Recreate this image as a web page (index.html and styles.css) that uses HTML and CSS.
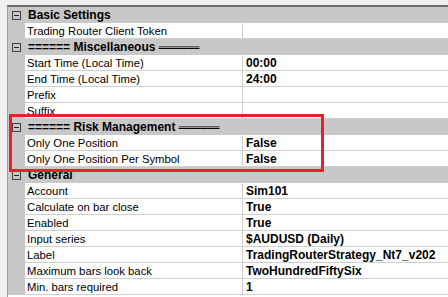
FILE: index.html
```html
<!DOCTYPE html>
<html>
<head>
<meta charset="utf-8">
<link rel="stylesheet" href="styles.css">
</head>
<body>
<div class="frame">
  <div class="grid">
    <div class="cat"><span class="gut"><span class="toggle"></span></span><span class="cat-name">Basic Settings</span></div>
    <div class="prop"><span class="gut"></span><span class="name">Trading Router Client Token</span><span class="value"></span></div>

    <div class="cat"><span class="gut"><span class="toggle"></span></span><span class="cat-name">====== Miscellaneous <span class="dbl">═══════</span></span></div>
    <div class="prop"><span class="gut"></span><span class="name">Start Time (Local Time)</span><span class="value">00:00</span></div>
    <div class="prop"><span class="gut"></span><span class="name">End Time (Local Time)</span><span class="value">24:00</span></div>
    <div class="prop"><span class="gut"></span><span class="name">Prefix</span><span class="value"></span></div>
    <div class="prop"><span class="gut"></span><span class="name">Suffix</span><span class="value"></span></div>

    <div class="cat"><span class="gut"><span class="toggle"></span></span><span class="cat-name">====== Risk Management <span class="dbl">═══════</span></span></div>
    <div class="prop"><span class="gut"></span><span class="name">Only One Position</span><span class="value">False</span></div>
    <div class="prop"><span class="gut"></span><span class="name">Only One Position Per Symbol</span><span class="value">False</span></div>

    <div class="cat"><span class="gut"><span class="toggle"></span></span><span class="cat-name">General</span></div>
    <div class="prop"><span class="gut"></span><span class="name">Account</span><span class="value">Sim101</span></div>
    <div class="prop"><span class="gut"></span><span class="name">Calculate on bar close</span><span class="value">True</span></div>
    <div class="prop"><span class="gut"></span><span class="name">Enabled</span><span class="value">True</span></div>
    <div class="prop"><span class="gut"></span><span class="name">Input series</span><span class="value">$AUDUSD (Daily)</span></div>
    <div class="prop"><span class="gut"></span><span class="name">Label</span><span class="value">TradingRouterStrategy_Nt7_v202</span></div>
    <div class="prop"><span class="gut"></span><span class="name">Maximum bars look back</span><span class="value">TwoHundredFiftySix</span></div>
    <div class="prop"><span class="gut"></span><span class="name">Min. bars required</span><span class="value">1</span></div>
  </div>
  <div class="highlight"></div>
</div>
</body>
</html>
```
FILE: styles.css
```css
html, body {
  margin: 0;
  padding: 0;
}
body {
  background: #f0f0f0;
  width: 448px;
  height: 297px;
  overflow: hidden;
  font-family: "Liberation Sans", Arial, sans-serif;
  font-size: 11.3px;
  color: #000;
}
.frame {
  position: relative;
  margin: 5px 0 0 7px;
  border-top: 2px solid #6e6e6e;
  border-left: 1px solid #a0a0a0;
  background: #fff;
  height: 300px;
}
.grid {
  display: flex;
  flex-direction: column;
}
.cat, .prop {
  display: flex;
  height: 16px;
  box-sizing: border-box;
  align-items: center;
}
.cat {
  background: #c8c8c8;
  font-weight: bold;
  font-size: 12px;
}
.gut {
  width: 17px;
  height: 100%;
  flex: none;
  background: #c8c8c8;
  display: flex;
  align-items: center;
  justify-content: center;
}
.prop {
  border-bottom: 1px solid #cfcfcf;
}
.prop .gut {
  height: 16px;
  align-self: flex-start;
}
.toggle {
  width: 9px;
  height: 9px;
  box-sizing: border-box;
  border: 1px solid #404040;
  position: relative;
}
.toggle::after {
  content: "";
  position: absolute;
  left: 1px;
  top: 3px;
  width: 5px;
  height: 1px;
  background: #202020;
}
.cat-name {
  padding-left: 3px;
  white-space: nowrap;
}
.dbl {
  font-family: "DejaVu Sans", sans-serif;
  font-weight: normal;
  font-size: 9.6px;
}
.name {
  width: 218px;
  flex: none;
  box-sizing: border-box;
  padding-left: 2px;
  border-right: 1px solid #cfcfcf;
  height: 100%;
  display: flex;
  align-items: center;
  white-space: nowrap;
  overflow: hidden;
}
.value {
  padding-left: 3px;
  font-weight: bold;
  font-size: 12px;
  white-space: nowrap;
}
.highlight {
  position: absolute;
  left: 1px;
  top: 107px;
  width: 315px;
  height: 58px;
  box-sizing: border-box;
  border: 3px solid #e8202a;
  pointer-events: none;
}
```
